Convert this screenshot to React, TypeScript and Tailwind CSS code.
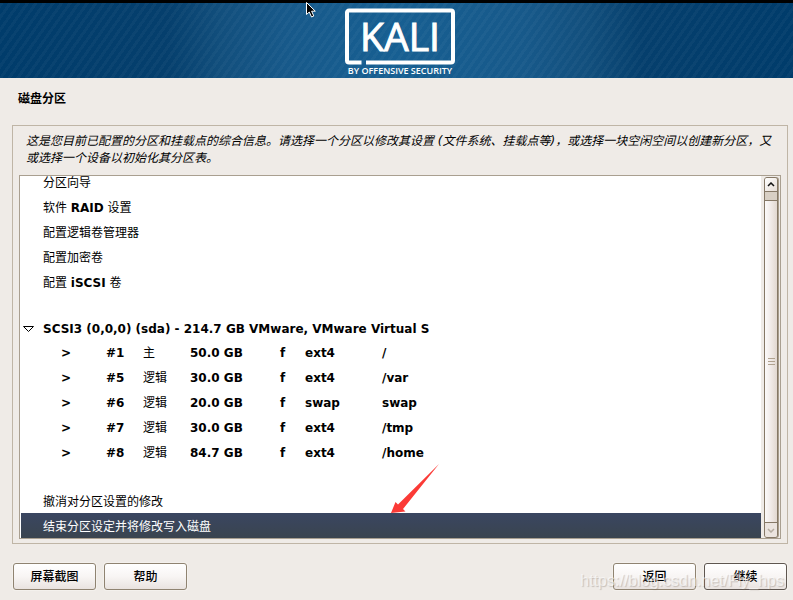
import { useState } from 'react';

interface Partition {
  id: string;
  kind: string;
  size: string;
  fs: string;
  mount: string;
}

const PARTITIONS: Partition[] = [
  { id: '#1', kind: '主', size: '50.0 GB', fs: 'ext4', mount: '/' },
  { id: '#5', kind: '逻辑', size: '30.0 GB', fs: 'ext4', mount: '/var' },
  { id: '#6', kind: '逻辑', size: '20.0 GB', fs: 'swap', mount: 'swap' },
  { id: '#7', kind: '逻辑', size: '30.0 GB', fs: 'ext4', mount: '/tmp' },
  { id: '#8', kind: '逻辑', size: '84.7 GB', fs: 'ext4', mount: '/home' },
];

function Logo() {
  return (
    <svg width="114" height="71" viewBox="0 0 114 71" className="shrink-0" role="img" aria-label="Kali">
      <path
        d="M18.500 57.500 H6 a2 2 0 0 1 -2 -2 V7.500 a2 2 0 0 1 2 -2 H108 a2 2 0 0 1 2 2 V55.500 a2 2 0 0 1 -2 2 H23"
        fill="none"
        stroke="white"
        strokeWidth="4"
      />
      <text x="57" y="46" textAnchor="middle" fill="white" stroke="white" strokeWidth="1" className="font-['Open_Sans',sans-serif] text-[39px]">
        KALI
      </text>
      <text x="57" y="69" textAnchor="middle" fill="white" className="font-['Open_Sans',sans-serif] text-[9px] font-semibold">
        BY OFFENSIVE SECURITY
      </text>
    </svg>
  );
}

interface ActionRowProps {
  label: string;
  selected: string;
  onSelect: (label: string) => void;
}

function ActionRow({ label, selected, onSelect }: ActionRowProps) {
  // Latin words are set bold between the Chinese text
  const parts = label.split(/([A-Za-z]+)/);
  return (
    <button
      type="button"
      onClick={() => onSelect(label)}
      className={`flex h-[25px] w-full shrink-0 items-center pt-[2px] pl-[22px] text-left whitespace-pre ${
        selected === label ? 'bg-linear-to-b from-[#3a4661] to-[#3a444f] text-white' : 'text-black'
      }`}
    >
      {parts.map((part, i) =>
        /[A-Za-z]/.test(part) ? (
          <span key={i} className="font-bold">{part}</span>
        ) : (
          <span key={i}>{part}</span>
        )
      )}
    </button>
  );
}

function DialogButton({ label, focused = false }: { label: string; focused?: boolean }) {
  return (
    <button
      type="button"
      className={`h-[27px] w-[83px] rounded-[3px] border bg-linear-to-b from-white via-[#f8f5f4] to-[#e9e3e0] pt-px font-medium text-black shadow-[0_0_0_1px_#f4f1ed] ${
        focused ? 'border-[#5e5650]' : 'border-[#8f8371]'
      }`}
    >
      {label}
    </button>
  );
}

function Scrollbar() {
  return (
    <div className="flex w-[19px] shrink-0 flex-col bg-[#efebe7] pt-px pr-[2px] pl-[3px]">
      <div className="flex flex-1 flex-col rounded-[3px] border border-[#857866] bg-[#d8cfc4] shadow-[1px_0_0_#a89d8c]">
        <button type="button" aria-label="Scroll up" className="flex h-[14px] items-center justify-center rounded-t-[2px] border-b border-[#857866] bg-linear-to-br from-white to-[#e6ddd6]">
          <svg width="8" height="5" viewBox="0 0 8 5">
            <path d="M1 4 L4 1 L7 4" fill="none" stroke="#111" strokeWidth="1.500" />
          </svg>
        </button>
        <div className="mt-2 flex flex-1 flex-col items-center justify-center gap-[2px] border-y border-[#857866] bg-linear-to-r from-[#fcfafa] via-[#f0eae7] to-[#e2d8d0]">
          <span className="h-px w-[7px] bg-[#b0a28f]" />
          <span className="h-px w-[7px] bg-[#b0a28f]" />
          <span className="h-px w-[7px] bg-[#b0a28f]" />
        </div>
        <button type="button" aria-label="Scroll down" disabled className="flex h-[14px] items-center justify-center rounded-b-[2px] bg-[#ebe4df]">
          <svg width="8" height="5" viewBox="0 0 8 5">
            <path d="M1 1 L4 4 L7 1" fill="none" stroke="#b5aca1" strokeWidth="1.500" />
          </svg>
        </button>
      </div>
    </div>
  );
}

export default function App() {
  const [selected, setSelected] = useState('结束分区设定并将修改写入磁盘');

  return (
    <div className="relative flex h-screen flex-col overflow-hidden bg-[#efebe7] font-['DejaVu_Sans','Noto_Sans_CJK_SC',sans-serif] text-xs text-black">
      <header className="relative flex h-[78px] shrink-0 items-center justify-center border-t-3 border-black bg-[repeating-linear-gradient(125deg,rgba(255,255,255,0.03)_0px,rgba(255,255,255,0.03)_3px,transparent_3px,transparent_7px),linear-gradient(to_right,#003c6b_0%,#053f6d_21%,#124f7d_28%,#17598a_36%,#175f92_50%,#17598a_66%,#124f7d_74%,#053f6d_81%,#003c6b_100%)] pl-[6px]">
        <Logo />
      </header>

      <main className="flex min-h-0 flex-1 flex-col pr-[5px] pb-[10px] pl-3">
        <h1 className="mt-[13px] mb-[17px] pl-[6px] text-xs leading-[17px] font-bold">磁盘分区</h1>

        <section className="flex min-h-0 flex-1 flex-col border border-[#bfb5a6] px-[6px] pb-1">
          <p className="mt-[7px] mb-2 pr-2 pl-[7px] leading-[17px] italic">
            这是您目前已配置的分区和挂载点的综合信息。请选择一个分区以修改其设置 (文件系统、挂载点等)，或选择一块空闲空间以创建新分区，又或选择一个设备以初始化其分区表。
          </p>

          <div className="flex min-h-0 flex-1 border border-[#a99f90] bg-white pl-px">
            {/* scrolled to the end, so the first row is cut off at the top */}
            <div className="flex min-w-0 flex-1 flex-col justify-end overflow-hidden">
              <ActionRow label="分区向导" selected={selected} onSelect={setSelected} />
              <ActionRow label="软件 RAID 设置" selected={selected} onSelect={setSelected} />
              <ActionRow label="配置逻辑卷管理器" selected={selected} onSelect={setSelected} />
              <ActionRow label="配置加密卷" selected={selected} onSelect={setSelected} />
              <ActionRow label="配置 iSCSI 卷" selected={selected} onSelect={setSelected} />

              <div className="mt-[23px] flex h-[23px] shrink-0 items-center font-bold">
                <svg width="22" height="8" viewBox="0 0 22 8" className="shrink-0">
                  <path d="M2.500 1.500 H12.500 L7.500 6.500 Z" fill="white" stroke="black" />
                </svg>
                SCSI3 (0,0,0) (sda) - 214.7 GB VMware, VMware Virtual S
              </div>
              <table className="mb-[23px] w-full shrink-0 table-fixed font-bold">
                <tbody>
                  {PARTITIONS.map((p) => (
                    <tr key={p.id} className="h-[25px]">
                      <td className="w-[85px] p-0 pl-10">&gt;</td>
                      <td className="w-[37px] p-0">{p.id}</td>
                      <td className="w-[47px] p-0 font-normal">{p.kind}</td>
                      <td className="w-[90px] p-0">{p.size}</td>
                      <td className="w-[25px] p-0">f</td>
                      <td className="w-[77px] p-0">{p.fs}</td>
                      <td className="p-0">{p.mount}</td>
                    </tr>
                  ))}
                </tbody>
              </table>

              <ActionRow label="撤消对分区设置的修改" selected={selected} onSelect={setSelected} />
              <ActionRow label="结束分区设定并将修改写入磁盘" selected={selected} onSelect={setSelected} />
            </div>
            <Scrollbar />
          </div>
        </section>

        <footer className="mt-[19px] flex shrink-0 justify-between pr-px pl-px">
          <div className="flex gap-2">
            <DialogButton label="屏幕截图" />
            <DialogButton label="帮助" />
          </div>
          <div className="flex gap-2">
            <DialogButton label="返回" />
            <DialogButton label="继续" focused />
          </div>
        </footer>
      </main>

      {/* mouse pointer */}
      <svg width="12" height="18" viewBox="0 0 12 18" className="absolute top-px left-[305px]">
        <path d="M1.500 1.500 V13.500 L4.300 11 L6.500 16 L8.800 15 L6.600 10.200 H10.300 Z" fill="black" stroke="white" />
      </svg>

      {/* arrow to the selected row */}
      <svg width="50" height="50" viewBox="0 0 50 50" className="absolute bottom-[87px] left-[390px]">
        <path d="M1 50 L5.500 39 L8 41.500 L49 1 L13 46 L15.500 48.500 Z" fill="#fb3a36" />
      </svg>

      <span className="pointer-events-none absolute right-[9px] bottom-[9px] font-['Liberation_Sans',sans-serif] text-base leading-5 text-white/60 [text-shadow:1px_1px_1px_rgba(120,110,100,0.35)]">
        https://blog.csdn.net/Fly_hps
      </span>
    </div>
  );
}
